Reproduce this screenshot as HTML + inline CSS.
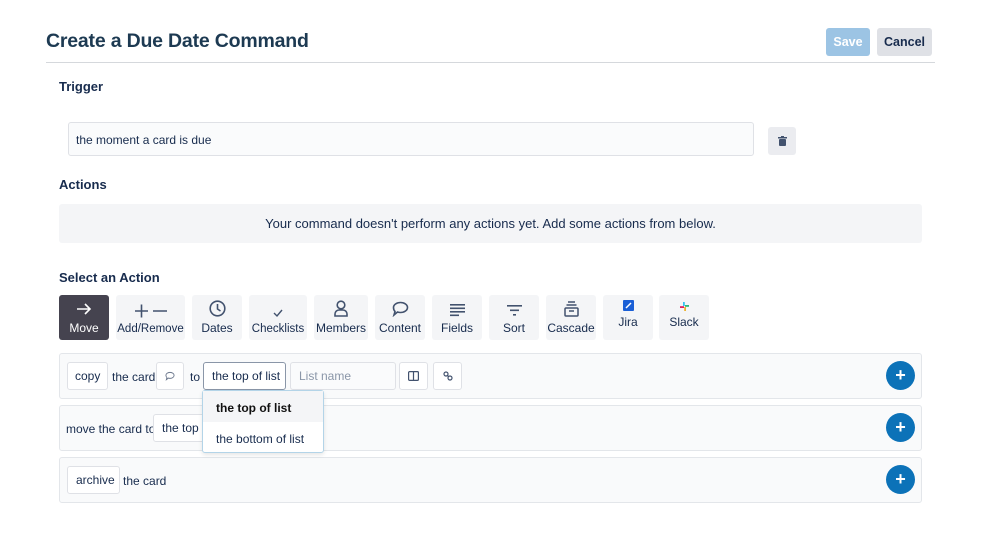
<!DOCTYPE html>
<html><head><style>
*{box-sizing:border-box;margin:0;padding:0}
body{width:999px;height:552px;background:#fff;font-family:"Liberation Sans",sans-serif;color:#172b4d;position:relative;overflow:hidden}
.a{position:absolute}
h1{position:absolute;left:46px;top:30px;font-size:19.5px;font-weight:bold;color:#1d3a52;letter-spacing:-0.2px}
.btn{position:absolute;border-radius:3px;font-weight:bold;font-size:12.5px;display:flex;align-items:center;justify-content:center}
.lbl{position:absolute;font-size:13px;font-weight:bold;color:#172b4d}
.act{position:absolute;top:295px;height:45px;background:#f4f5f7;border-radius:3px;font-size:12px;color:#172b4d;display:flex;flex-direction:column;align-items:center;justify-content:flex-end;padding-bottom:5px;white-space:nowrap}
.act svg{margin-bottom:4px}
.row{position:absolute;left:59px;width:863px;height:46px;background:#f9fafb;border:1px solid #e3e6ea;border-radius:3px}
.box{position:absolute;height:28px;border:1px solid #dfe1e6;background:#fff;border-radius:3px;font-size:12px;display:flex;align-items:center;padding:0 8px;color:#172b4d;white-space:nowrap;overflow:hidden}
.t{position:absolute;font-size:12px;color:#172b4d;white-space:nowrap}
.plus{position:absolute;left:886px;width:29px;height:29px;border-radius:50%;background:#0c72b8;color:#fff;font-weight:bold;font-size:18px;display:flex;align-items:center;justify-content:center}
</style></head><body>
<h1>Create a Due Date Command</h1>
<div class="btn" style="left:826px;top:28px;width:44px;height:28px;background:#9cc4e4;color:#fff">Save</div>
<div class="btn" style="left:877px;top:28px;width:55px;height:28px;background:#dfe1e6;color:#172b4d">Cancel</div>
<div class="a" style="left:46px;top:62px;width:889px;height:1px;background:#d5d8dc"></div>
<div class="lbl" style="left:59px;top:79px">Trigger</div>
<div class="a" style="left:68px;top:122px;width:686px;height:34px;border:1px solid #dfe1e6;border-radius:3px;background:#fafbfc;font-size:12px;padding:10px 7px">the moment a card is due</div>
<div class="a" style="left:768px;top:127px;width:28px;height:28px;background:#ebecf0;border-radius:3px;display:flex;align-items:center;justify-content:center"><svg width="9" height="10" viewBox="0 0 9 10"><rect x="0" y="1" width="9" height="1.5" fill="#42526e"/><rect x="3" y="0" width="3" height="1.5" fill="#42526e"/><rect x="1" y="3" width="7" height="7" rx="1" fill="#42526e"/></svg></div>
<div class="lbl" style="left:59px;top:177px">Actions</div>
<div class="a" style="left:59px;top:204px;width:863px;height:39px;background:#f4f5f7;border-radius:3px;font-size:13px;text-align:center;line-height:39px">Your command doesn't perform any actions yet. Add some actions from below.</div>
<div class="lbl" style="left:59px;top:270px">Select an Action</div>
<div class="act" style="left:59px;width:50px;background:#45434f;color:#fff"><svg width="16" height="16" viewBox="0 0 16 16" fill="none" stroke="#fff" stroke-width="1.6"><path d="M1 8h13M9 3l5 5-5 5"/></svg>Move</div>
<div class="act" style="left:116px;width:69px;font-size:11.5px"><svg width="34" height="16" viewBox="0 0 34 16" fill="none" stroke="#42526e" stroke-width="1.6"><path d="M1 8h13M7.5 1.5v13M19 8h14"/></svg>Add/Remove</div>
<div class="act" style="left:192px;width:50px"><svg width="17" height="17" viewBox="0 0 17 17" fill="none" stroke="#42526e" stroke-width="1.6"><circle cx="8.5" cy="8.5" r="7.3"/><path d="M8.5 4v5l3 2"/></svg>Dates</div>
<div class="act" style="left:249px;width:58px;font-size:11.5px"><svg width="12" height="12" viewBox="0 0 12 12" fill="none" stroke="#42526e" stroke-width="1.4"><path d="M2 6l3 3 5-6"/></svg>Checklists</div>
<div class="act" style="left:314px;width:54px"><svg width="14" height="17" viewBox="0 0 14 17" fill="none" stroke="#42526e" stroke-width="1.6"><circle cx="7" cy="5" r="3.8"/><path d="M1 16v-2a4 4 0 014-4h4a4 4 0 014 4v2z"/></svg>Members</div>
<div class="act" style="left:375px;width:50px"><svg width="17" height="16" viewBox="0 0 17 16" fill="none" stroke="#42526e" stroke-width="1.6"><path d="M8.5 1.5c4 0 7 2.3 7 5s-3 5-7 5c-1 0-2-.1-3-.5L2 14l1-3.5C2 9.5 1.5 8 1.5 6.5c0-2.7 3-5 7-5z"/></svg>Content</div>
<div class="act" style="left:432px;width:50px"><svg width="15" height="14" viewBox="0 0 15 14" fill="#42526e"><rect y="1" width="15" height="1.6"/><rect y="4.5" width="15" height="1.6"/><rect y="8" width="15" height="1.6"/><rect y="11.5" width="9" height="1.6"/></svg>Fields</div>
<div class="act" style="left:489px;width:50px"><svg width="15" height="13" viewBox="0 0 15 13" fill="#42526e"><rect y="1" width="15" height="1.6"/><rect x="3" y="5.5" width="9" height="1.6"/><rect x="6" y="10" width="3" height="1.6"/></svg>Sort</div>
<div class="act" style="left:546px;width:50px"><svg width="15" height="16" viewBox="0 0 15 16" fill="none" stroke="#42526e" stroke-width="1.5"><path d="M4 1h7M2.5 4h10"/><rect x="1" y="7" width="13" height="8" rx="1"/><path d="M5 10h5"/></svg>Cascade</div>
<div class="act" style="left:603px;width:50px;padding-bottom:11px"><svg width="11" height="11" viewBox="0 0 11 11"><rect width="11" height="11" rx="1" fill="#1a5fd6"/><path d="M3 8l5-5" stroke="#fff" stroke-width="1.5"/></svg>Jira</div>
<div class="act" style="left:659px;width:50px;padding-bottom:11px"><svg width="9" height="9" viewBox="0 0 9 9"><rect x="3" y="0" width="1.8" height="4" fill="#36c5f0"/><rect x="5" y="3" width="4" height="1.8" fill="#2eb67d"/><rect x="4.2" y="5" width="1.8" height="4" fill="#ecb22e"/><rect x="0" y="4.2" width="4" height="1.8" fill="#e01e5a"/></svg>Slack</div>

<div class="row" style="top:353px"></div>
<div class="box" style="left:67px;top:362px;width:41px;padding:0 7px">copy</div>
<div class="t" style="left:112px;top:370px">the card</div>
<div class="box" style="left:156px;top:362px;width:28px;justify-content:center"><svg width="11" height="10" viewBox="0 0 11 10" fill="none" stroke="#6b778c" stroke-width="1"><path d="M5.5 1c2.5 0 4.5 1.5 4.5 3.3S8 7.6 5.5 7.6c-.6 0-1.2 0-1.8-.3L1.5 9l.6-2.2C1.4 6 1 5.2 1 4.3 1 2.5 3 1 5.5 1z"/></svg></div>
<div class="t" style="left:190px;top:370px">to</div>
<div class="box" style="left:203px;top:362px;width:83px;border-color:#8a96a8;padding:0 8px">the top of list</div>
<div class="box" style="left:290px;top:362px;width:106px;background:#fafbfc;color:#8a96a8">List name</div>
<div class="box" style="left:399px;top:362px;width:29px;justify-content:center"><svg width="11" height="10" viewBox="0 0 11 10" fill="none" stroke="#42526e" stroke-width="1.2"><rect x=".6" y=".6" width="9.8" height="8.8" rx="1"/><path d="M5.5 1v8"/></svg></div>
<div class="box" style="left:433px;top:362px;width:29px;justify-content:center"><svg width="10" height="10" viewBox="0 0 10 10" fill="none" stroke="#42526e" stroke-width="1.2"><circle cx="3" cy="3" r="2"/><circle cx="7" cy="7" r="2"/><path d="M4.3 4.3l1.4 1.4"/></svg></div>
<div class="plus" style="top:361px">+</div>

<div class="row" style="top:405px"></div>
<div class="t" style="left:66px;top:422px">move the card to</div>
<div class="box" style="left:153px;top:414px;width:60px">the top of list</div>
<div class="plus" style="top:413px">+</div>

<div class="row" style="top:457px"></div>
<div class="box" style="left:67px;top:466px;width:53px">archive</div>
<div class="t" style="left:123px;top:474px">the card</div>
<div class="plus" style="top:465px">+</div>

<div class="a" style="left:202px;top:390px;width:122px;height:63px;background:#fff;border:1px solid #b3d4e8;border-radius:3px;box-shadow:0 2px 4px rgba(0,0,0,.1);font-size:12px;white-space:nowrap">
<div style="height:31px;background:#f4f5f7;font-weight:bold;padding:10px 13px;color:#111">the top of list</div>
<div style="padding:10px 13px">the bottom of list</div>
</div>
</body></html>
